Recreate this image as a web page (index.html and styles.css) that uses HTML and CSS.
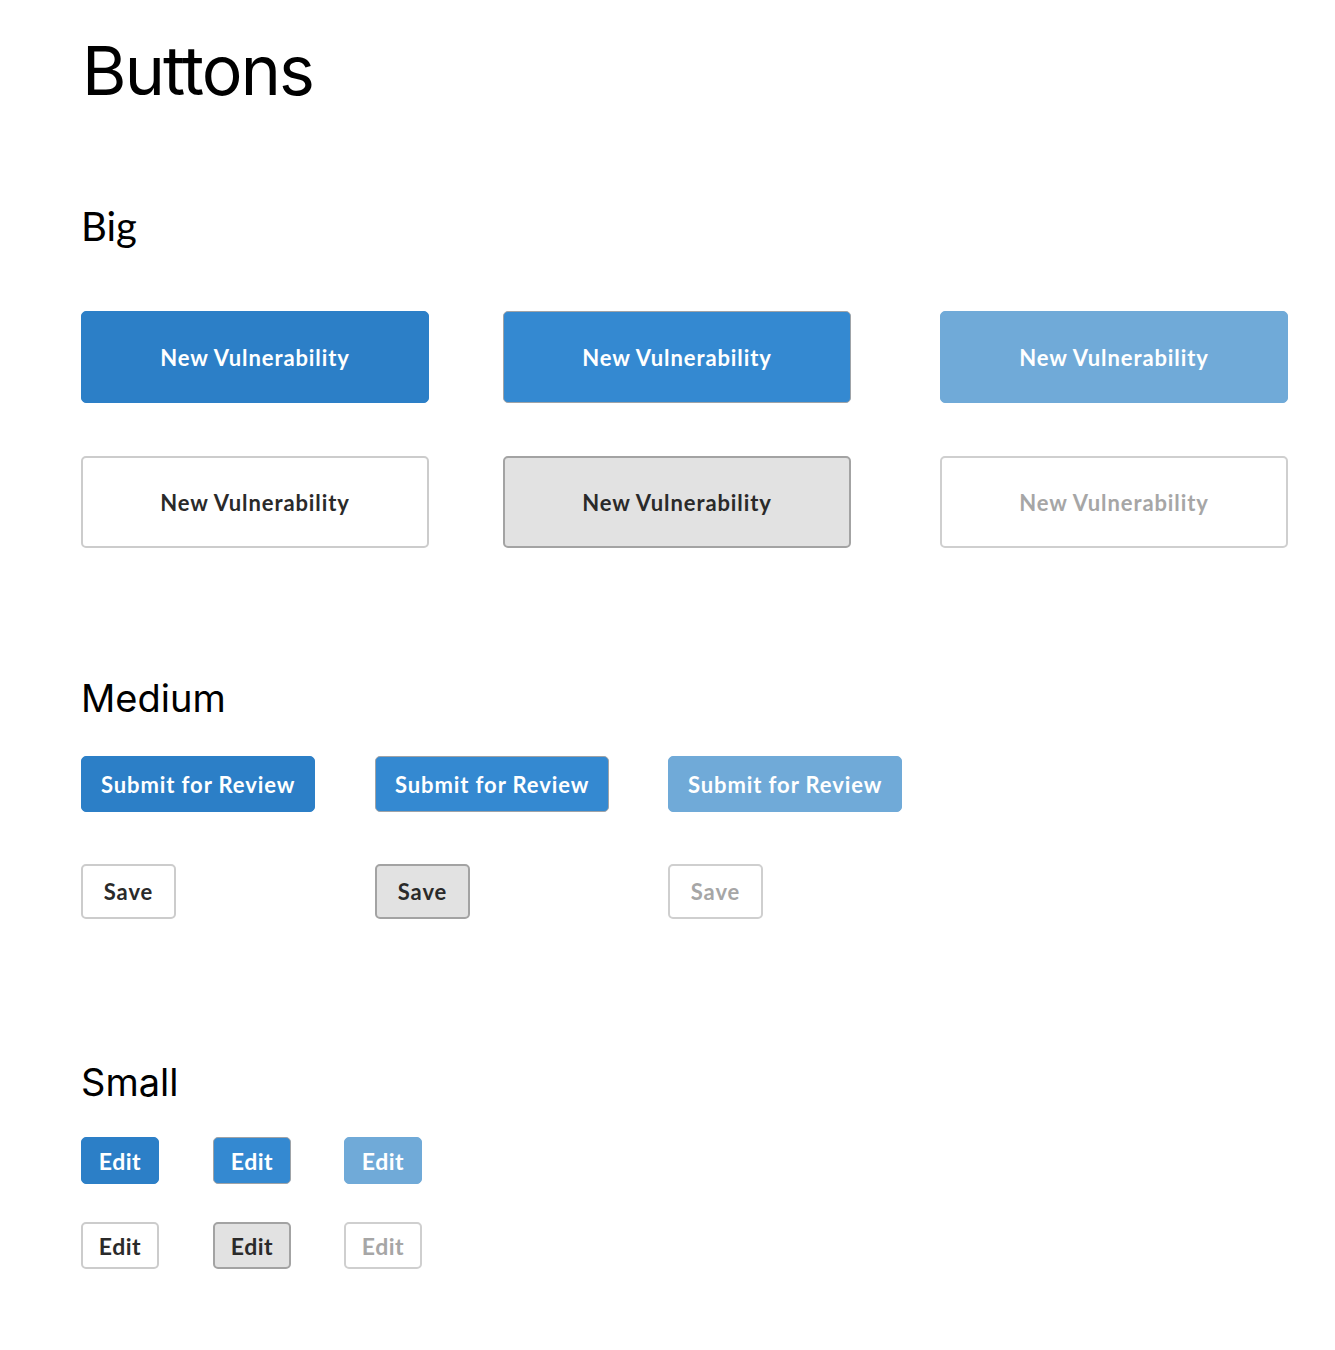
FILE: index.html
```html
<!DOCTYPE html>
<html>
<head>
<meta charset="utf-8">
<link rel="stylesheet" href="styles.css">
</head>
<body>
<main class="page">
  <h1 class="title">Buttons</h1>

  <section class="group">
    <h2 class="group-title big-title">Big</h2>
    <div class="grid grid-big">
      <button class="btn btn-big primary">New Vulnerability</button>
      <button class="btn btn-big primary active">New Vulnerability</button>
      <button class="btn btn-big primary disabled">New Vulnerability</button>
      <button class="btn btn-big secondary">New Vulnerability</button>
      <button class="btn btn-big secondary active">New Vulnerability</button>
      <button class="btn btn-big secondary disabled">New Vulnerability</button>
    </div>
  </section>

  <section class="group">
    <h2 class="group-title medium-title">Medium</h2>
    <div class="grid grid-medium">
      <div class="cell"><button class="btn btn-medium primary">Submit for Review</button></div>
      <div class="cell"><button class="btn btn-medium primary active">Submit for Review</button></div>
      <div class="cell"><button class="btn btn-medium primary disabled">Submit for Review</button></div>
      <div class="cell"><button class="btn btn-medium secondary">Save</button></div>
      <div class="cell"><button class="btn btn-medium secondary active">Save</button></div>
      <div class="cell"><button class="btn btn-medium secondary disabled">Save</button></div>
    </div>
  </section>

  <section class="group">
    <h2 class="group-title small-title">Small</h2>
    <div class="grid grid-small">
      <button class="btn btn-small primary">Edit</button>
      <button class="btn btn-small primary active">Edit</button>
      <button class="btn btn-small primary disabled">Edit</button>
      <button class="btn btn-small secondary">Edit</button>
      <button class="btn btn-small secondary active">Edit</button>
      <button class="btn btn-small secondary disabled">Edit</button>
    </div>
  </section>
</main>
</body>
</html>
```

FILE: styles.css
```css
* { box-sizing: border-box; }

html, body {
  margin: 0;
  padding: 0;
  background: #ffffff;
}

body {
  font-family: "Lato", "Noto Sans", sans-serif;
  color: #000;
}

.page {
  padding: 30px 0 60px 81px;
}

.title {
  font-family: "Inter", "Roboto", sans-serif;
  font-weight: 400;
  font-size: 68px;
  line-height: 80px;
  margin: 0 0 0 1px;
  letter-spacing: -1.8px;
}

.group-title {
  font-family: "Inter", "Roboto", sans-serif;
  font-weight: 400;
  font-size: 38px;
  line-height: 48px;
  margin: 0;
}

.big-title {
  font-family: "Lato", "Noto Sans", sans-serif;
  font-size: 40px;
  margin-top: 92px;
}
.medium-title { margin-top: 126px; }
.small-title { margin-top: 139px; }

.grid {
  display: grid;
  justify-items: start;
  align-items: start;
}

.grid-big {
  margin-top: 61px;
  grid-template-columns: 422px 437px 348px;
  row-gap: 53px;
}

.grid-medium {
  margin-top: 34px;
  grid-template-columns: 294px 293px 240px;
  row-gap: 52px;
}

.grid-small {
  margin-top: 31px;
  grid-template-columns: 132px 131px 78px;
  row-gap: 38px;
}

.btn {
  font-family: "Lato", "Noto Sans", sans-serif;
  font-weight: 700;
  border: 1px solid transparent;
  cursor: pointer;
  padding: 0;
  display: flex;
  align-items: center;
  justify-content: center;
}

.btn-big {
  width: 348px;
  height: 92px;
  border-radius: 5px;
  font-size: 22px;
  letter-spacing: 0.9px;
}

.btn-medium {
  height: 56px;
  padding: 0 19px;
  border-radius: 5px;
  font-size: 22px;
  letter-spacing: 0.9px;
}

.btn-small {
  width: 78px;
  height: 47px;
  border-radius: 5px;
  font-size: 23px;
  letter-spacing: 0.5px;
}

.primary {
  background: #2c7fc7;
  border-color: #2c7fc7;
  color: #ffffff;
}

.primary.active {
  background: #3489d1;
  border-color: #9fa3a7;
}

.primary.disabled {
  background: #70aad8;
  border-color: #70aad8;
}

.secondary {
  background: #ffffff;
  border: 2px solid #cccccc;
  color: #2a2a2a;
}

.btn-medium.secondary {
  width: 95px;
  height: 55px;
  padding: 0;
}

.secondary.active {
  background: #e2e2e2;
  border-color: #a3a3a3;
}

.secondary.disabled {
  color: #a6a6a6;
  border-color: #cfcfcf;
}
```
